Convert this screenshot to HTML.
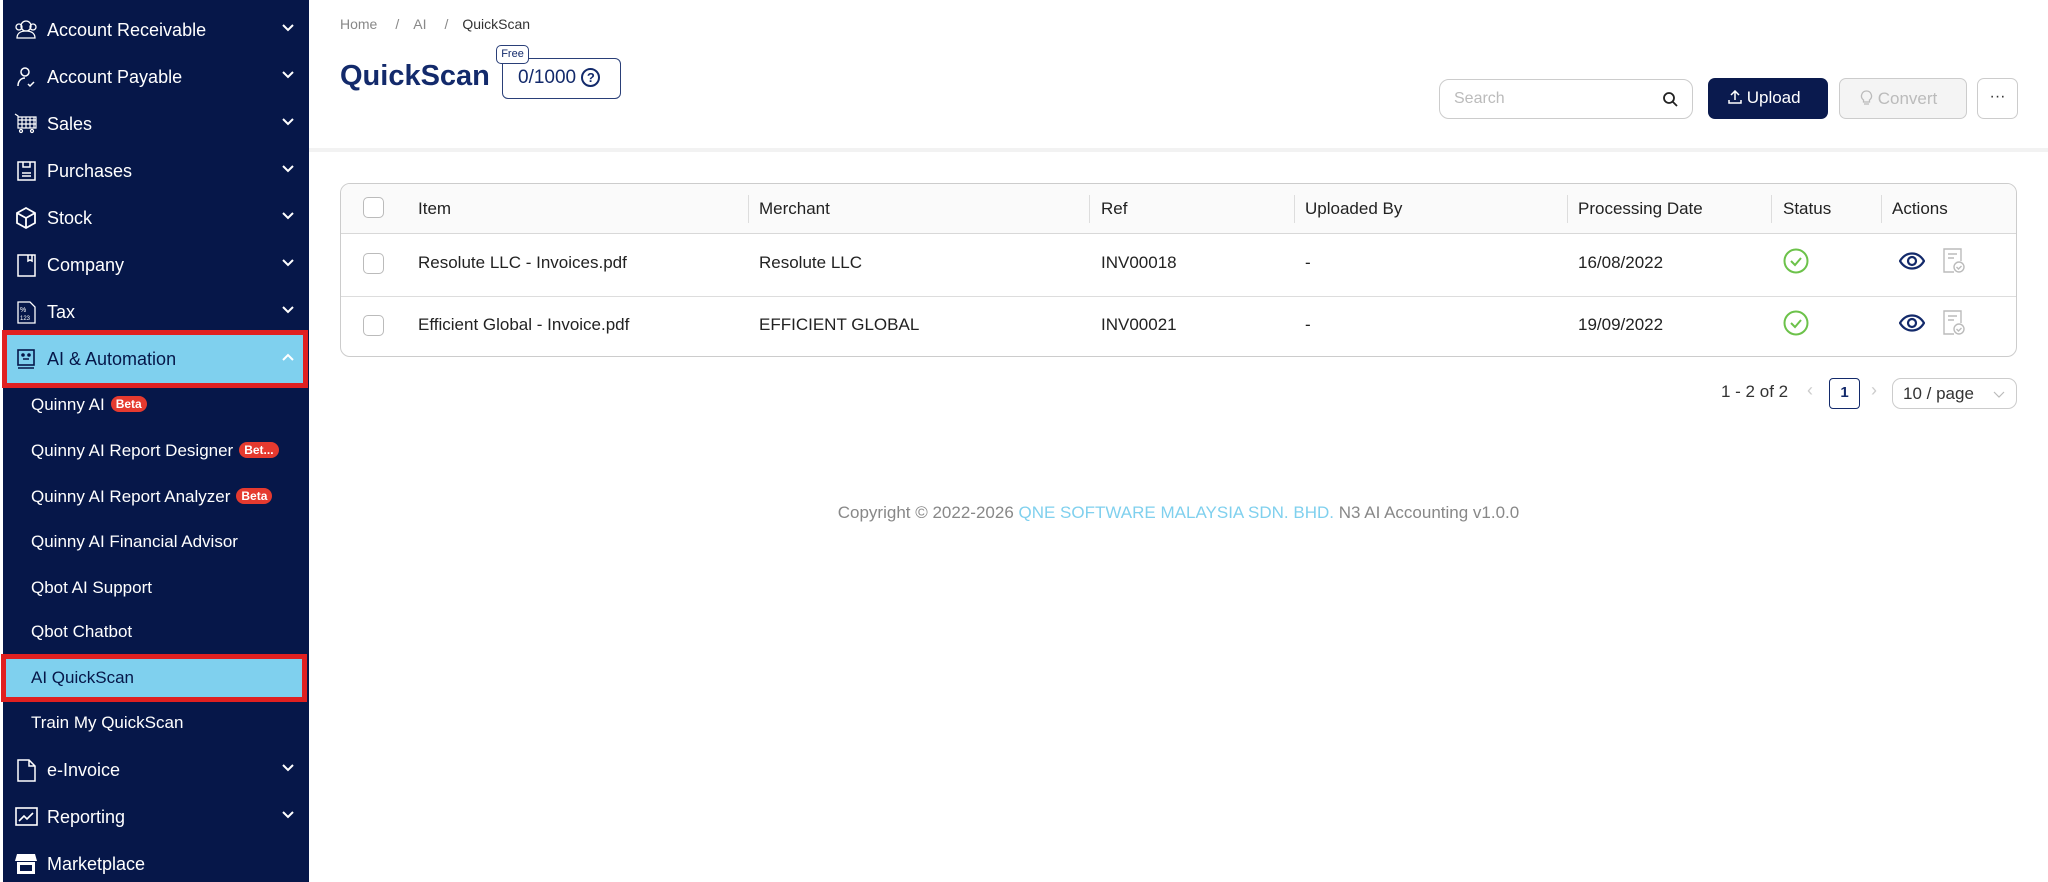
<!DOCTYPE html>
<html><head><meta charset="utf-8"><style>
*{box-sizing:border-box;margin:0;padding:0}
body{width:2048px;height:882px;overflow:hidden;background:#fff;font-family:"Liberation Sans",sans-serif;position:relative;color:#222}
.a{position:absolute}
#sb{left:3px;top:0;width:306px;height:882px;background:#061749}
.mi{position:absolute;left:0;width:306px;color:#fff;font-size:18px;line-height:20px}
.mi .t{position:absolute;left:44px;top:0;white-space:nowrap}
.mi .ic{position:absolute;left:11px;top:-2px;width:24px;height:24px}
.mi .ch{position:absolute;left:279px;top:2px;width:12px;height:12px}
.si{position:absolute;left:31px;color:#fff;font-size:17px;white-space:nowrap;line-height:20px}
.beta{display:inline-block;background:#e53a2f;color:#fff;font-weight:bold;font-size:12px;border-radius:9px;padding:1px 5px;margin-left:6px;vertical-align:2px;line-height:14px}
.th{position:absolute;top:199px;font-size:17px;color:#222}
.dv{position:absolute;top:195px;width:1px;height:28px;background:#ddd}
.td{position:absolute;font-size:17px;color:#222;white-space:nowrap}
.cb{position:absolute;left:363px;width:21px;height:21px;border:1px solid #bbb;border-radius:5px;background:#fff}
</style></head><body>
<div id="sb" class="a">
 <svg width="0" height="0" style="position:absolute"><defs><path id="chev" d="M1 3l5 5 5-5" fill="none" stroke="#fff" stroke-width="2"/></defs></svg>
 <div class="mi" style="top:20px"><svg class="ic" viewBox="0 0 24 24" fill="none" stroke="#fff" stroke-width="1.3"><circle cx="12" cy="8" r="5"/><path d="M3 20c0-5 4-7 9-7s9 2 9 7z"/><circle cx="5" cy="9" r="3"/><circle cx="19" cy="9" r="3"/></svg><span class="t">Account Receivable</span><svg class="ch" viewBox="0 0 12 12"><use href="#chev"/></svg></div>
 <div class="mi" style="top:67px"><svg class="ic" viewBox="0 0 24 24" fill="none" stroke="#fff" stroke-width="1.5"><circle cx="11" cy="7" r="4"/><path d="M4 21c0-5 3-8 7-8M14 19l2 2 4-4"/></svg><span class="t">Account Payable</span><svg class="ch" viewBox="0 0 12 12"><use href="#chev"/></svg></div>
 <div class="mi" style="top:114px"><svg class="ic" viewBox="0 0 24 24" fill="none" stroke="#fff" stroke-width="1.2"><path d="M1 2l3 2v12h18V5H4M4 8h18M4 12h18M8 5v11M12 5v11M16 5v11M20 5v11"/><circle cx="7" cy="19" r="1.5"/><circle cx="18" cy="19" r="1.5"/></svg><span class="t">Sales</span><svg class="ch" viewBox="0 0 12 12"><use href="#chev"/></svg></div>
 <div class="mi" style="top:161px"><svg class="ic" viewBox="0 0 24 24" fill="none" stroke="#fff" stroke-width="1.5"><rect x="4" y="3" width="17" height="18"/><path d="M9 3v5h7V3M8 14h9M8 17h9"/></svg><span class="t">Purchases</span><svg class="ch" viewBox="0 0 12 12"><use href="#chev"/></svg></div>
 <div class="mi" style="top:208px"><svg class="ic" viewBox="0 0 24 24" fill="none" stroke="#fff" stroke-width="1.8"><path d="M12 2l9 5v10l-9 5-9-5V7zM3 7l9 5 9-5M12 12v10"/></svg><span class="t">Stock</span><svg class="ch" viewBox="0 0 12 12"><use href="#chev"/></svg></div>
 <div class="mi" style="top:255px"><svg class="ic" viewBox="0 0 24 24" fill="none" stroke="#fff" stroke-width="1.5"><rect x="4" y="2" width="17" height="21"/><path d="M14 2v6l2-1 2 1V2"/></svg><span class="t">Company</span><svg class="ch" viewBox="0 0 12 12"><use href="#chev"/></svg></div>
 <div class="mi" style="top:302px"><svg class="ic" viewBox="0 0 24 24" fill="none" stroke="#fff" stroke-width="1.3"><path d="M4 2h12l5 5v16H4z"/><text x="6" y="12" font-size="7" fill="#fff" stroke="none">%</text><text x="6" y="20" font-size="6" fill="#fff" stroke="none">123</text></svg><span class="t">Tax</span><svg class="ch" viewBox="0 0 12 12"><use href="#chev"/></svg></div>
</div>
<div class="a" style="left:2px;top:330px;width:306px;height:58px;border:5px solid #e02020;background:#7fd0ee"></div>
<div class="mi" style="top:349px;left:3px"><svg class="ic" viewBox="0 0 24 24" fill="none" stroke="#061749" stroke-width="1.6"><rect x="4" y="3" width="16" height="15"/><path d="M4 21h16M9 12h6"/><circle cx="9" cy="8" r="1" fill="#061749"/><circle cx="15" cy="8" r="1" fill="#061749"/></svg><span class="t" style="color:#061749">AI &amp; Automation</span><svg class="ch" viewBox="0 0 12 12"><path d="M1 9l5-5 5 5" fill="none" stroke="#fff" stroke-width="2"/></svg></div>
<div class="si" style="top:395px">Quinny AI<span class="beta">Beta</span></div>
<div class="si" style="top:441px">Quinny AI Report Designer<span class="beta">Bet...</span></div>
<div class="si" style="top:487px">Quinny AI Report Analyzer<span class="beta">Beta</span></div>
<div class="si" style="top:532px">Quinny AI Financial Advisor</div>
<div class="si" style="top:578px">Qbot AI Support</div>
<div class="si" style="top:622px">Qbot Chatbot</div>
<div class="a" style="left:1px;top:654px;width:306px;height:48px;border:5px solid #e02020;background:#7fd0ee"></div>
<div class="si" style="top:668px;color:#061749">AI QuickScan</div>
<div class="si" style="top:713px">Train My QuickScan</div>
<div class="mi" style="top:760px;left:3px"><svg class="ic" viewBox="0 0 24 24" fill="none" stroke="#fff" stroke-width="1.5"><path d="M4 2h11l6 6v15H4zM15 2v6h6"/></svg><span class="t">e-Invoice</span><svg class="ch" viewBox="0 0 12 12"><use href="#chev"/></svg></div>
<div class="mi" style="top:807px;left:3px"><svg class="ic" viewBox="0 0 24 24" fill="none" stroke="#fff" stroke-width="1.6"><rect x="2" y="3" width="21" height="17"/><path d="M5 16l5-5 3 3 6-6"/></svg><span class="t">Reporting</span><svg class="ch" viewBox="0 0 12 12"><use href="#chev"/></svg></div>
<div class="mi" style="top:854px;left:3px"><svg class="ic" viewBox="0 0 24 24" fill="#fff"><path d="M3 2h18l2 7H1zM3 10h18v12H3zM6 13v6h12v-6z"/></svg><span class="t">Marketplace</span></div>

<!-- header -->
<div class="a" style="left:340px;top:16px;font-size:14px;color:#888">Home<span style="margin:0 14px 0 18px">/</span>AI<span style="margin:0 14px 0 18px">/</span><span style="color:#333">QuickScan</span></div>
<div class="a" style="left:340px;top:60px;font-size:29px;font-weight:bold;color:#132a6b">QuickScan</div>
<div class="a" style="left:502px;top:58px;width:119px;height:41px;border:1.5px solid #2a3f78;border-radius:6px;font-size:19px;color:#132a6b;padding:8px 0 0 15px">0/1000 <span style="display:inline-block;width:19px;height:19px;border:2px solid #132a6b;border-radius:50%;font-size:13px;font-weight:bold;text-align:center;line-height:15px;vertical-align:1px">?</span></div>
<div class="a" style="left:496px;top:45px;width:33px;height:19px;border:1.5px solid #2a3f78;border-radius:5px;background:#fff;font-size:11px;color:#132a6b;text-align:center;line-height:16px">Free</div>
<div class="a" style="left:1439px;top:79px;width:254px;height:40px;border:1px solid #ccc;border-radius:10px;font-size:16px;color:#bbb;padding:10px 0 0 14px">Search
<svg class="a" style="left:222px;top:11px" width="17" height="17" viewBox="0 0 17 17" fill="none" stroke="#222" stroke-width="1.8"><circle cx="7" cy="7" r="5"/><path d="M11 11l4 4"/></svg></div>
<div class="a" style="left:1708px;top:78px;width:120px;height:41px;background:#0a1a4e;border-radius:7px;color:#fff;font-size:17px;padding:10px 0 0 20px"><svg width="14" height="14" viewBox="0 0 14 14" fill="none" stroke="#fff" stroke-width="1.5" style="vertical-align:-1px"><path d="M7 10V1M3 5l4-4 4 4M1 10v3h12v-3"/></svg> Upload</div>
<div class="a" style="left:1839px;top:78px;width:128px;height:41px;background:#f4f4f4;border:1px solid #ccc;border-radius:7px;color:#bbb;font-size:17px;padding:10px 0 0 20px"><svg width="13" height="16" viewBox="0 0 13 16" fill="none" stroke="#bbb" stroke-width="1.3" style="vertical-align:-2px"><path d="M6.5 1a5 5 0 0 0-3 9v2h6v-2a5 5 0 0 0-3-9zM4 14h5"/></svg> Convert</div>
<div class="a" style="left:1977px;top:78px;width:41px;height:41px;border:1px solid #ccc;border-radius:7px;text-align:center;font-size:16px;line-height:36px;color:#333">···</div>
<div class="a" style="left:309px;top:148px;width:1739px;height:4px;background:#f2f2f2"></div>

<!-- table -->
<div class="a" style="left:340px;top:183px;width:1677px;height:174px;border:1px solid #ccc;border-radius:10px;overflow:hidden">
 <div class="a" style="left:0;top:0;width:100%;height:50px;background:#fafafa;border-bottom:1px solid #d8d8d8"></div>
 <div class="a" style="left:0;top:112px;width:100%;height:1px;background:#ddd"></div>
</div>
<div class="cb" style="top:197px"></div><div class="cb" style="top:253px"></div><div class="cb" style="top:315px"></div>
<div class="th" style="left:418px">Item</div>
<div class="dv" style="left:748px"></div><div class="th" style="left:759px">Merchant</div>
<div class="dv" style="left:1089px"></div><div class="th" style="left:1101px">Ref</div>
<div class="dv" style="left:1294px"></div><div class="th" style="left:1305px">Uploaded By</div>
<div class="dv" style="left:1567px"></div><div class="th" style="left:1578px">Processing Date</div>
<div class="dv" style="left:1771px"></div><div class="th" style="left:1783px">Status</div>
<div class="dv" style="left:1881px"></div><div class="th" style="left:1892px">Actions</div>

<div class="td" style="left:418px;top:253px">Resolute LLC - Invoices.pdf</div>
<div class="td" style="left:759px;top:253px">Resolute LLC</div>
<div class="td" style="left:1101px;top:253px">INV00018</div>
<div class="td" style="left:1305px;top:253px">-</div>
<div class="td" style="left:1578px;top:253px">16/08/2022</div>
<div class="td" style="left:418px;top:315px">Efficient Global - Invoice.pdf</div>
<div class="td" style="left:759px;top:315px">EFFICIENT GLOBAL</div>
<div class="td" style="left:1101px;top:315px">INV00021</div>
<div class="td" style="left:1305px;top:315px">-</div>
<div class="td" style="left:1578px;top:315px">19/09/2022</div>

<svg class="a" style="left:1783px;top:248px" width="26" height="26" viewBox="0 0 26 26" fill="none" stroke="#6cc24a" stroke-width="2"><circle cx="13" cy="13" r="11.5"/><path d="M8 13l4 4 6-7"/></svg>
<svg class="a" style="left:1783px;top:310px" width="26" height="26" viewBox="0 0 26 26" fill="none" stroke="#6cc24a" stroke-width="2"><circle cx="13" cy="13" r="11.5"/><path d="M8 13l4 4 6-7"/></svg>
<svg class="a" style="left:1899px;top:252px" width="26" height="18" viewBox="0 0 26 18" fill="none" stroke="#132a6b" stroke-width="2.2"><path d="M1 9c3-5 7-7.5 12-7.5S22 4 25 9c-3 5-7 7.5-12 7.5S4 14 1 9z"/><circle cx="13" cy="9" r="4"/></svg>
<svg class="a" style="left:1899px;top:314px" width="26" height="18" viewBox="0 0 26 18" fill="none" stroke="#132a6b" stroke-width="2.2"><path d="M1 9c3-5 7-7.5 12-7.5S22 4 25 9c-3 5-7 7.5-12 7.5S4 14 1 9z"/><circle cx="13" cy="9" r="4"/></svg>
<svg class="a" style="left:1942px;top:248px" width="24" height="26" viewBox="0 0 24 26" fill="none" stroke="#bbb" stroke-width="1.4"><path d="M12 24H2V1h17v12M6 6h9M6 10h6"/><circle cx="17" cy="19" r="5"/><path d="M14.5 19l2 2 3-3"/></svg>
<svg class="a" style="left:1942px;top:310px" width="24" height="26" viewBox="0 0 24 26" fill="none" stroke="#bbb" stroke-width="1.4"><path d="M12 24H2V1h17v12M6 6h9M6 10h6"/><circle cx="17" cy="19" r="5"/><path d="M14.5 19l2 2 3-3"/></svg>

<!-- pagination -->
<div class="a" style="left:1721px;top:382px;font-size:17px;color:#333">1 - 2 of 2</div>
<div class="a" style="left:1807px;top:380px;font-size:18px;color:#ccc">‹</div>
<div class="a" style="left:1829px;top:378px;width:31px;height:31px;border:1.5px solid #132a6b;border-radius:4px;text-align:center;line-height:28px;font-size:15px;font-weight:bold;color:#132a6b">1</div>
<div class="a" style="left:1871px;top:380px;font-size:18px;color:#ccc">›</div>
<div class="a" style="left:1892px;top:378px;width:125px;height:31px;border:1px solid #ccc;border-radius:9px;font-size:17px;color:#333;padding:5px 0 0 10px">10 / page<svg class="a" style="left:100px;top:12px" width="12" height="8" viewBox="0 0 12 8" fill="none" stroke="#bbb" stroke-width="1.2"><path d="M1 1l5 5 5-5"/></svg></div>

<div class="a" style="left:309px;top:503px;width:1739px;text-align:center;font-size:17px;color:#888">Copyright © 2022-2026 <span style="color:#7fd0ee">QNE SOFTWARE MALAYSIA SDN. BHD.</span> N3 AI Accounting v1.0.0</div>
</body></html>
